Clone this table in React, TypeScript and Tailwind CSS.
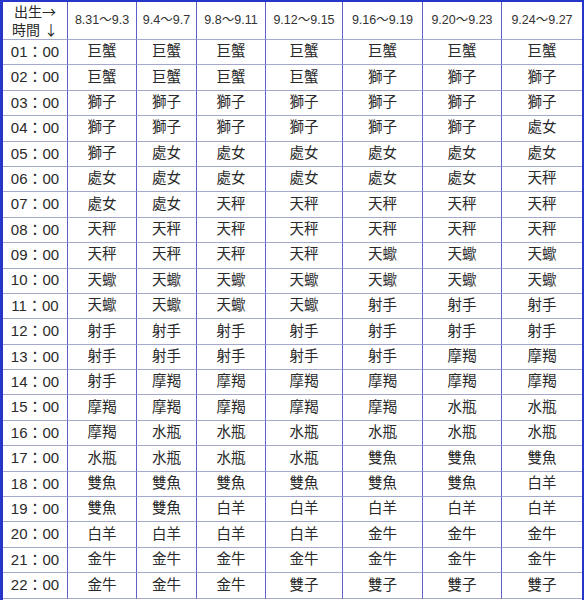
const ranges = ['8.31～9.3', '9.4～9.7', '9.8～9.11', '9.12～9.15', '9.16～9.19', '9.20～9.23', '9.24～9.27'];

const rows: string[][] = [
  ['巨蟹', '巨蟹', '巨蟹', '巨蟹', '巨蟹', '巨蟹', '巨蟹'],
  ['巨蟹', '巨蟹', '巨蟹', '巨蟹', '獅子', '獅子', '獅子'],
  ['獅子', '獅子', '獅子', '獅子', '獅子', '獅子', '獅子'],
  ['獅子', '獅子', '獅子', '獅子', '獅子', '獅子', '處女'],
  ['獅子', '處女', '處女', '處女', '處女', '處女', '處女'],
  ['處女', '處女', '處女', '處女', '處女', '處女', '天秤'],
  ['處女', '處女', '天秤', '天秤', '天秤', '天秤', '天秤'],
  ['天秤', '天秤', '天秤', '天秤', '天秤', '天秤', '天秤'],
  ['天秤', '天秤', '天秤', '天秤', '天蠍', '天蠍', '天蠍'],
  ['天蠍', '天蠍', '天蠍', '天蠍', '天蠍', '天蠍', '天蠍'],
  ['天蠍', '天蠍', '天蠍', '天蠍', '射手', '射手', '射手'],
  ['射手', '射手', '射手', '射手', '射手', '射手', '射手'],
  ['射手', '射手', '射手', '射手', '射手', '摩羯', '摩羯'],
  ['射手', '摩羯', '摩羯', '摩羯', '摩羯', '摩羯', '摩羯'],
  ['摩羯', '摩羯', '摩羯', '摩羯', '摩羯', '水瓶', '水瓶'],
  ['摩羯', '水瓶', '水瓶', '水瓶', '水瓶', '水瓶', '水瓶'],
  ['水瓶', '水瓶', '水瓶', '水瓶', '雙魚', '雙魚', '雙魚'],
  ['雙魚', '雙魚', '雙魚', '雙魚', '雙魚', '雙魚', '白羊'],
  ['雙魚', '雙魚', '白羊', '白羊', '白羊', '白羊', '白羊'],
  ['白羊', '白羊', '白羊', '白羊', '金牛', '金牛', '金牛'],
  ['金牛', '金牛', '金牛', '金牛', '金牛', '金牛', '金牛'],
  ['金牛', '金牛', '金牛', '雙子', '雙子', '雙子', '雙子'],
];

const cols = 'grid grid-cols-[65px_69px_60px_69px_77px_80px_79px_80px]';
const cell = 'flex items-center justify-center border-b border-b-[#a4a8cc] border-r border-r-[#5c5fc8] last:border-r-0';

export default function App() {
  return (
    <div
      className="w-[584px] h-[600px] overflow-hidden bg-white text-[#2a2a2a] border-l-[3px] border-t-2 border-r-2 border-[#2536c9]"
      style={{ fontFamily: '"Liberation Sans", "Noto Sans CJK TC", sans-serif' }}
    >
      <div className={`${cols} h-[38px]`}>
        <div className={`${cell} flex-col text-[14px] leading-[17px]`}>
          <span>出生<span className="font-['Noto_Sans_CJK_TC',sans-serif]">→</span></span>
          <span>時間 <span className="font-['Noto_Sans_CJK_TC',sans-serif]">↓</span></span>
        </div>
        {ranges.map((r) => (
          <div key={r} className={`${cell} text-[12.5px] text-[#333]`}>
            {r}
          </div>
        ))}
      </div>
      {rows.map((row, i) => {
        const hour = String(i + 1).padStart(2, '0');
        return (
          <div key={hour} className={`${cols} h-[25.4px]`}>
            <div className={`${cell} text-[15px]`}>{hour}：00</div>
            {row.map((sign, j) => (
              <div key={j} className={`${cell} text-[14.5px]`}>
                {sign}
              </div>
            ))}
          </div>
        );
      })}
    </div>
  );
}
